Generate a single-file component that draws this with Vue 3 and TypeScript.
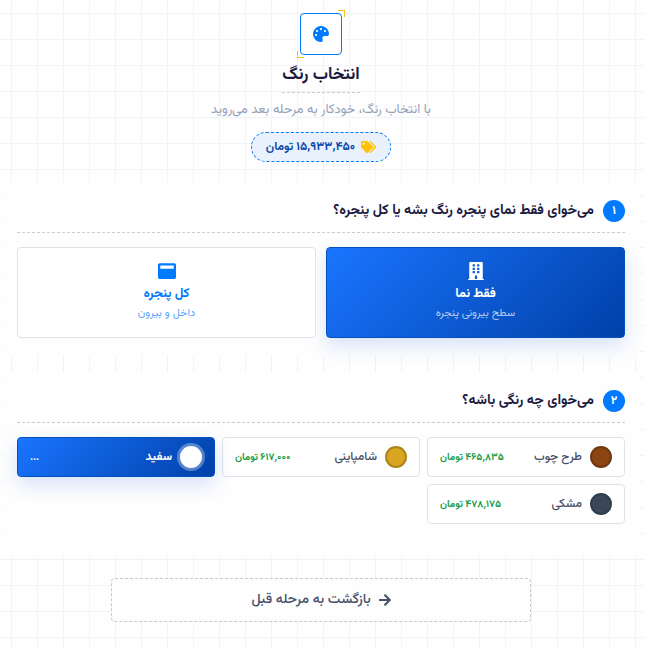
<script setup lang="ts">
import { ref } from 'vue'

interface Scope { id: string; title: string; note: string }
interface Colour { id: string; name: string; price: string; hex: string; rim: string }

const scopes: Scope[] = [
  { id: 'facade', title: 'فقط نما', note: 'سطح بیرونی پنجره' },
  { id: 'full', title: 'کل پنجره', note: 'داخل و بیرون' },
]
const colours: Colour[] = [
  { id: 'wood', name: 'طرح چوب', price: '۴۶۵,۸۳۵ تومان', hex: '#8b4513', rim: '#6f370f' },
  { id: 'champagne', name: 'شامپاینی', price: '۶۱۷,۰۰۰ تومان', hex: '#daa520', rim: '#ae841a' },
  { id: 'white', name: 'سفید', price: '...', hex: '#ffffff', rim: '#ffffff' },
  { id: 'black', name: 'مشکی', price: '۴۷۸,۱۷۵ تومان', hex: '#3b4756', rim: '#2c3f4c' },
]
const scope = ref('facade')
const colour = ref('white')
</script>

<template>
  <main class="page" dir="rtl" lang="fa">
    <header class="header">
      <div class="badge">
        <svg viewBox="0 0 512 512" width="16" height="16" fill="currentColor" aria-hidden="true">
          <path d="M204.3 5C104.900 24.400 24.800 104.300 5.200 203.400c-37 187 131.700 326.400 258.800 306.700 41.200-6.400 61.400-54.600 42.500-91.700-23.100-45.400 9.900-98.400 60.900-98.400h79.700c35.800 0 64.800-29.600 64.900-65.300C511.500 97.100 368.100-26.900 204.300 5zM96 320c-17.700 0-32-14.300-32-32s14.300-32 32-32 32 14.300 32 32-14.300 32-32 32zm32-128c-17.700 0-32-14.300-32-32s14.300-32 32-32 32 14.300 32 32-14.300 32-32 32zm128-64c-17.700 0-32-14.300-32-32s14.300-32 32-32 32 14.300 32 32-14.300 32-32 32zm128 64c-17.700 0-32-14.300-32-32s14.300-32 32-32 32 14.300 32 32-14.300 32-32 32z" />
        </svg>
      </div>
      <h1>انتخاب رنگ</h1>
      <p class="hint">با انتخاب رنگ، خودکار به مرحله بعد می‌روید</p>
      <div class="total">
        <svg viewBox="0 0 640 512" width="15" height="12" fill="currentColor" aria-hidden="true">
          <path d="M497.941 225.941L286.059 14.059A48 48 0 0 0 252.118 0H48C21.490 0 0 21.490 0 48v204.118a48 48 0 0 0 14.059 33.941l211.882 211.882c18.744 18.745 49.136 18.746 67.882 0l204.118-204.118c18.745-18.745 18.745-49.137 0-67.882zM112 160c-26.510 0-48-21.490-48-48s21.490-48 48-48 48 21.490 48 48-21.490 48-48 48zm513.941 133.823L421.823 497.941c-18.745 18.745-49.137 18.745-67.882 0l-.36-.36L527.640 323.522c16.999-16.999 26.360-39.600 26.360-63.640s-9.362-46.641-26.360-63.640L331.397 0h48.721a48 48 0 0 1 33.941 14.059l211.882 211.882c18.745 18.745 18.745 49.137 0 67.882z" />
        </svg>
        <span>۱۵,۹۳۳,۴۵۰ تومان</span>
      </div>
    </header>

    <section class="panel">
      <h2><span class="step">۱</span>می‌خوای فقط نمای پنجره رنگ بشه یا کل پنجره؟</h2>
      <div class="scopes">
        <button v-for="s in scopes" :key="s.id" type="button" class="card scope" :class="{ active: scope === s.id }" :aria-pressed="scope === s.id" @click="scope = s.id">
          <svg v-if="s.id === 'facade'" viewBox="0 0 448 512" width="16" height="18" aria-hidden="true">
            <path fill="currentColor" fill-rule="evenodd" d="M436 480h-20V24c0-13.300-10.700-24-24-24H56C42.700 0 32 10.700 32 24v456H12c-6.600 0-12 5.400-12 12v20h448v-20c0-6.600-5.400-12-12-12zM128 64h64v64h-64zM256 64h64v64h-64zM128 160h64v64h-64zM256 160h64v64h-64zM128 256h64v64h-64zM256 256h64v64h-64zM192 384h64v96h-64z" />
          </svg>
          <svg v-else viewBox="0 0 512 512" width="18" height="18" aria-hidden="true">
            <path fill="currentColor" d="M464 32H48C21.500 32 0 53.500 0 80v352c0 26.500 21.500 48 48 48h416c26.500 0 48-21.500 48-48V80c0-26.500-21.500-48-48-48zm-16 160H64v-84c0-6.600 5.400-12 12-12h360c6.600 0 12 5.400 12 12v84z" />
          </svg>
          <strong>{{ s.title }}</strong>
          <small>{{ s.note }}</small>
        </button>
      </div>
    </section>

    <section class="panel last">
      <h2><span class="step">۲</span>می‌خوای چه رنگی باشه؟</h2>
      <div class="colours">
        <button v-for="c in colours" :key="c.id" type="button" class="card colour" :class="{ active: colour === c.id }" :aria-pressed="colour === c.id" @click="colour = c.id">
          <span class="swatch" :style="{ backgroundColor: c.hex, borderColor: c.rim }"></span>
          <span class="name">{{ c.name }}</span>
          <span class="price">{{ c.price }}</span>
        </button>
      </div>
    </section>

    <button type="button" class="back">
      <svg viewBox="0 0 448 512" width="12" height="14" fill="currentColor" aria-hidden="true">
        <path d="M190.500 66.900l22.200-22.200c9.400-9.400 24.600-9.400 33.900 0L441 239c9.400 9.400 9.400 24.600 0 33.900L246.600 467.300c-9.400 9.400-24.600 9.400-33.900 0l-22.200-22.200c-9.500-9.500-9.300-25 .4-34.300L311.400 296H24c-13.300 0-24-10.700-24-24v-32c0-13.300 10.700-24 24-24h287.400L190.900 101.200c-9.800-9.300-10-24.800-.4-34.300z" />
      </svg>
      <span>بازگشت به مرحله قبل</span>
    </button>
  </main>
</template>

<style>
body { margin: 0; background: #fefefe; }
</style>

<style scoped>
* { box-sizing: border-box; }
.page {
  min-height: 100vh;
  padding: 13px 5px 26px 2px;
  font-family: "Vazirmatn", "DejaVu Sans", sans-serif;
  color: #1a1a3e;
  background-color: #fefefe;
  background-image:
    linear-gradient(#f0f3f7 1px, transparent 1px),
    linear-gradient(90deg, #f0f3f7 1px, transparent 1px);
  background-size: 26px 26px;
  background-position: 11px 13px;
}
button { font-family: inherit; cursor: pointer; }
.header { display: flex; flex-direction: column; align-items: center; height: 169px; }
.badge {
  position: relative; display: flex; align-items: center; justify-content: center;
  width: 42px; height: 42px; border: 1px solid #007bff; border-radius: 4px; background: #fff; color: #007bff;
}
.badge::before, .badge::after { content: ""; position: absolute; width: 6px; height: 6px; border: 0 solid #f2c41b; }
.badge::before { top: -4px; right: -4px; border-width: 1px 1px 0 0; }
.badge::after { bottom: -4px; left: -4px; border-width: 0 0 1px 1px; }
h1 { margin: 6px 0 0; height: 32px; line-height: 28px; font-size: 17px; font-weight: 700; border-bottom: 1px dashed #c8cdd5; }
.hint { margin: 6px 0 0; line-height: 22px; font-size: 13px; color: #94a0b8; }
.total {
  display: flex; align-items: center; gap: 6px; height: 30px; margin-top: 11px; padding: 0 14px;
  border: 1px dashed #007bff; border-radius: 15px; background: #e9f1fd; color: #0b4bab; font-size: 12px; font-weight: 700;
}
.total svg { color: #ffc107; }
.panel { padding: 12px 15px 17px; background: #fefefe; margin-bottom: 17px; }
.panel.last { padding-bottom: 32px; margin-bottom: 22px; }
h2 {
  display: flex; align-items: center; gap: 9px; margin: 0 0 14px; padding: 6px 0 10px;
  border-bottom: 1px dashed #c8cdd0; font-size: 14px; line-height: 22px; font-weight: 700;
}
.step { width: 22px; height: 22px; border-radius: 50%; background: #007bff; color: #fff; font-size: 12px; text-align: center; }
.scopes { display: grid; grid-template-columns: repeat(2, 1fr); gap: 10px; }
.card { border: 1px solid #dde3ea; border-radius: 4px; background: #fff; color: #007bff; }
.card.active {
  border-color: #0451bd; color: #fff; background: linear-gradient(135deg, #1a75ff, #0040a8);
  box-shadow: 0 8px 20px rgb(0 80 220 / 16%);
}
.scope { display: flex; flex-direction: column; align-items: center; height: 91px; padding: 14px 0 0; }
.scope strong { margin-top: 2px; font-size: 13px; line-height: 24px; }
.scope small { font-size: 11px; line-height: 16px; opacity: .68; }
.colours { display: grid; grid-template-columns: repeat(3, 1fr); gap: 7px; }
.colour { display: flex; align-items: center; gap: 8px; height: 40px; padding: 0 12px; }
.swatch { width: 22px; height: 22px; border: 2px solid; border-radius: 50%; }
.name { font-size: 12px; font-weight: 500; color: #475069; }
.price { margin-inline-start: auto; font-size: 10px; font-weight: 700; color: #1b9e4b; }
.active .swatch { box-shadow: 0 0 0 3px rgb(255 255 255 / 32%); }
.active .name, .active .price { color: #fff; }
.active .name { font-weight: 700; }
.back {
  display: flex; align-items: center; justify-content: center; gap: 8px; width: 100%; max-width: 420px; height: 44px; margin: 0 auto;
  border: 1px dashed #c5c9d3; border-radius: 4px; background: #fefefe; color: #475069; font-size: 14px; font-weight: 500;
}
</style>
